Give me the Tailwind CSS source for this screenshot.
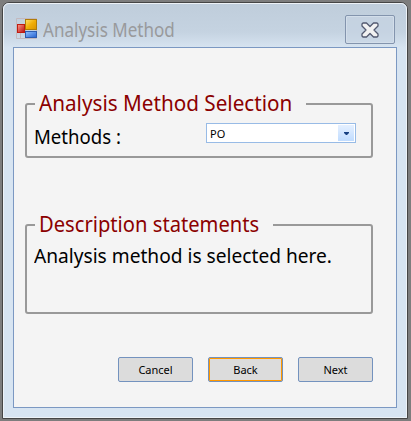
<!DOCTYPE html>
<html lang="en">
<head>
<meta charset="utf-8">
<title>Analysis Method</title>
<script src="https://cdn.jsdelivr.net/npm/@tailwindcss/browser@4"></script>
</head>
<body class="h-[421px] w-[411px] overflow-hidden bg-[#7d7d7d] pt-[2px] pl-[2px] font-['Noto_Sans','Open_Sans',sans-serif] text-black">
<div class="flex h-[417px] w-[406px] flex-col rounded-t-[7px] border border-[#454545] bg-[#d7e4f1]">
  <div class="flex h-[415px] w-[404px] flex-col rounded-t-[6px] border border-[#edf2f7] bg-linear-to-b from-[#bfcddb] from-0% via-[#c5d3e1] via-[28px] to-[#d7e4f1] to-[44px]">
    <header class="flex h-[43px] shrink-0 items-start pl-[12px]">
      <svg class="mt-[14px] h-[21px] w-[21px] shrink-0" viewBox="0 0 21 21">
        <defs>
          <linearGradient id="y" x1="0" y1="0" x2="1" y2="1"><stop offset="0" stop-color="#ffe26a"/><stop offset=".5" stop-color="#f0ae08"/><stop offset="1" stop-color="#d89400"/></linearGradient>
          <linearGradient id="r" x1="0" y1="0" x2="1" y2="1"><stop offset="0" stop-color="#ff9a8a"/><stop offset="1" stop-color="#b80d0d"/></linearGradient>
          <linearGradient id="b" x1="0" y1="0" x2="1" y2="1"><stop offset="0" stop-color="#90c0ff"/><stop offset="1" stop-color="#2462d0"/></linearGradient>
        </defs>
        <path d="M.5.5H20.500V20.500H.5ZM4.500 15V20M9.500 0V20" fill="none" stroke="#c3b9be"/>
        <rect x="9.500" y="1.500" width="11" height="10" fill="url(#y)" stroke="#b07c08"/>
        <rect x="1.500" y="6.500" width="7" height="8" fill="url(#r)" stroke="#c01c10"/>
        <rect x="9.500" y="13.500" width="11" height="6" fill="url(#b)" stroke="#2c5cb0"/>
      </svg>
      <h1 class="mt-[12px] ml-[6px] w-[302px] text-[19px] leading-[28px] whitespace-nowrap text-[#999a9c]"><span class="inline-block origin-left scale-x-[0.897]">Analysis Method</span></h1>
      <button aria-label="Close" class="mt-[11px] flex h-[29px] w-[50px] shrink-0 items-center justify-center rounded-[2px] border border-[#8394ad] bg-[#c7d4e2]/60 shadow-[inset_0_0_0_1px_#d3deea]">
        <svg class="h-[16px] w-[18px]" viewBox="0 0 18 16"><path d="M2 1H5.500L9 4.500 12.500 1H16L17 2V4L13 8 17 12V14L16 15H12.500L9 11.500 5.500 15H2L1 14V12L5 8 1 4V2Z" fill="#f2f2f2" stroke="#535a70" stroke-width="1.300" stroke-linejoin="round"/></svg>
      </button>
    </header>
    <main class="ml-[9px] flex h-[361px] w-[384px] flex-col border border-[#7b98c2] bg-[#f4f4f4] pl-[11px]">
      <fieldset class="mt-[42px] h-[68px] w-[348px] rounded-[3px] border-2 border-[#999999] pl-[8px]">
        <legend class="h-[28px] w-[271px] pl-[4px] text-[21px] leading-[26px] whitespace-nowrap text-[#8b0000]"><span class="inline-block origin-left scale-x-[0.985]">Analysis Method Selection</span></legend>
        <div class="flex">
          <label class="mt-[5px] -ml-px w-[172px] text-[20px] leading-[28px] whitespace-nowrap"><span class="inline-block origin-left scale-x-[0.93]">Methods :</span></label>
          <div class="mt-[5px] flex h-[20px] w-[150px] justify-between border border-[#98bbe6] bg-white p-[1px] pl-[3px] text-[11px] leading-[17px]">
            <span>PO</span>
            <span class="flex h-[16px] w-[16px] items-center justify-center bg-linear-to-b from-[#e5f0ff] to-[#c0dcff]">
              <svg class="h-[3px] w-[5px]" viewBox="0 0 5 3"><path d="M0 0H5V1L3 3H2L0 1Z" fill="#174082"/></svg>
            </span>
          </div>
        </div>
      </fieldset>
      <fieldset class="mt-[53px] h-[103px] w-[348px] rounded-[3px] border-2 border-[#999999] pl-[8px]">
        <legend class="h-[28px] w-[238px] pl-[4px] text-[21px] leading-[26px] whitespace-nowrap text-[#8b0000]"><span class="inline-block origin-left scale-x-[0.96]">Description statements</span></legend>
        <p class="mt-[3px] -ml-px text-[20px] leading-[28px] whitespace-nowrap"><span class="inline-block origin-left scale-x-[0.957]">Analysis method is selected here.</span></p>
      </fieldset>
      <div class="mt-[43px] flex gap-[15px] pl-[93px] text-[11px] leading-[23px]">
        <button class="h-[25px] w-[75px] rounded-[2px] border border-[#7392be] bg-[#dcdcdc]">Cancel</button>
        <button class="h-[25px] w-[75px] rounded-[2px] border border-[#7392be] bg-[#dcdcdc] shadow-[inset_0_0_0_1px_#ff9800]">Back</button>
        <button class="h-[25px] w-[75px] rounded-[2px] border border-[#7392be] bg-[#dcdcdc]">Next</button>
      </div>
    </main>
  </div>
</div>
</body>
</html>
